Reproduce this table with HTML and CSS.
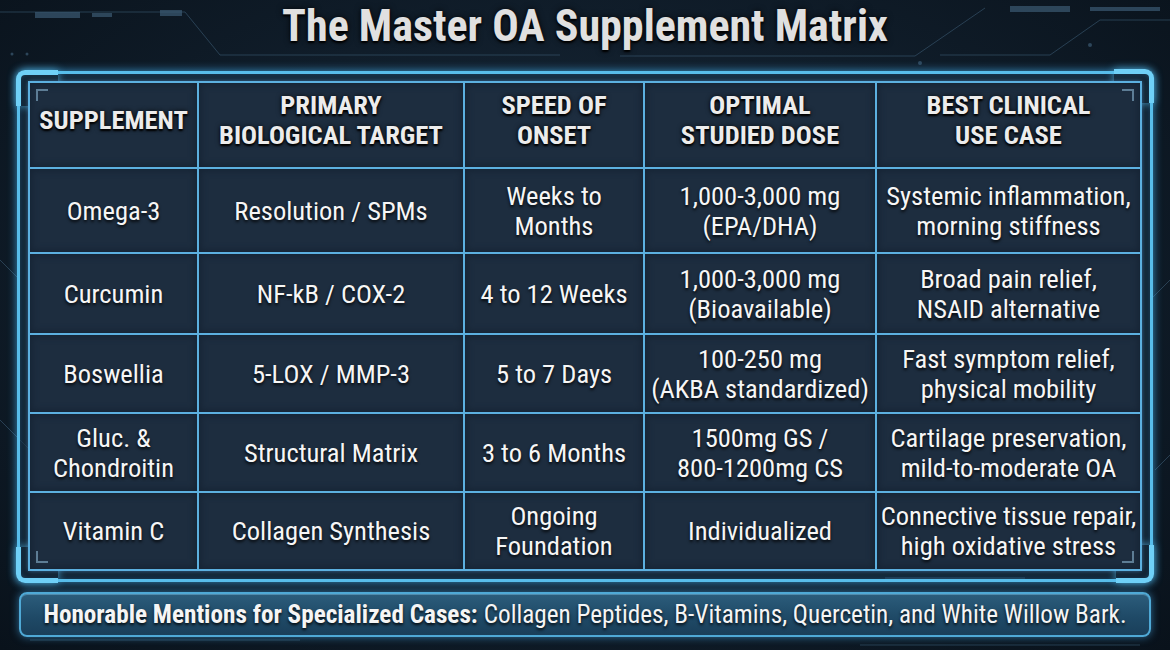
FILE: index.html
```html
<!DOCTYPE html>
<html lang="en">
<head>
<meta charset="utf-8">
<title>The Master OA Supplement Matrix</title>
<link rel="stylesheet" href="styles.css">
</head>
<body>
<div class="page">
  <svg class="circuit" width="1170" height="650" viewBox="0 0 1170 650" aria-hidden="true">
    <g fill="none" stroke="#3b5a73" stroke-width="1" opacity="0.6">
      <path d="M0 12 H185 L220 55 H560"/>
      <path d="M985 8 L915 56 H620"/>
      <path d="M1170 20 H1100 L1050 55 H940"/>
      <path d="M0 260 L20 280"/>
      <path d="M0 420 L30 450"/>
      <path d="M1150 300 L1170 280"/>
      <path d="M1155 470 L1170 455"/>
      <path d="M30 640 H300"/>
      <path d="M860 645 H1140"/>
    </g>
    <g fill="#3b5a73" opacity="0.7">
      <rect x="35" y="12" width="45" height="6"/>
      <rect x="92" y="13" width="20" height="4"/>
      <rect x="160" y="10" width="22" height="6"/>
      <rect x="1010" y="6" width="60" height="6"/>
      <rect x="1090" y="7" width="70" height="4"/>
      <rect x="885" y="577" width="140" height="2"/>
      <circle cx="12" cy="54" r="1.5"/>
      <circle cx="27" cy="54" r="1.5"/>
      <circle cx="1090" cy="45" r="2"/>
      <circle cx="920" cy="63" r="2"/>
    </g>
  </svg>

  <h1 class="title">The Master OA Supplement Matrix</h1>

  <div class="frame">
    <span class="notch notch-tl"></span>
    <span class="notch notch-tr"></span>
    <span class="notch notch-bl"></span>
    <span class="notch notch-br"></span>
    <div class="matrix">
      <span class="bracket bracket-tl"></span>
      <span class="bracket bracket-tr"></span>
      <span class="bracket bracket-bl"></span>
      <span class="bracket bracket-br"></span>

      <div class="cell head">SUPPLEMENT</div>
      <div class="cell head">PRIMARY<br>BIOLOGICAL TARGET</div>
      <div class="cell head">SPEED OF<br>ONSET</div>
      <div class="cell head">OPTIMAL<br>STUDIED DOSE</div>
      <div class="cell head">BEST CLINICAL<br>USE CASE</div>

      <div class="cell">Omega-3</div>
      <div class="cell">Resolution / SPMs</div>
      <div class="cell">Weeks to<br>Months</div>
      <div class="cell">1,000-3,000 mg<br>(EPA/DHA)</div>
      <div class="cell">Systemic inflammation,<br>morning stiffness</div>

      <div class="cell">Curcumin</div>
      <div class="cell">NF-kB / COX-2</div>
      <div class="cell">4 to 12 Weeks</div>
      <div class="cell">1,000-3,000 mg<br>(Bioavailable)</div>
      <div class="cell">Broad pain relief,<br>NSAID alternative</div>

      <div class="cell">Boswellia</div>
      <div class="cell">5-LOX / MMP-3</div>
      <div class="cell">5 to 7 Days</div>
      <div class="cell">100-250 mg<br>(AKBA standardized)</div>
      <div class="cell">Fast symptom relief,<br>physical mobility</div>

      <div class="cell">Gluc. &amp;<br>Chondroitin</div>
      <div class="cell">Structural Matrix</div>
      <div class="cell">3 to 6 Months</div>
      <div class="cell">1500mg GS /<br>800-1200mg CS</div>
      <div class="cell">Cartilage preservation,<br>mild-to-moderate OA</div>

      <div class="cell">Vitamin C</div>
      <div class="cell">Collagen Synthesis</div>
      <div class="cell">Ongoing<br>Foundation</div>
      <div class="cell">Individualized</div>
      <div class="cell">Connective tissue repair,<br>high oxidative stress</div>
    </div>
  </div>

  <div class="banner">
    <strong>Honorable Mentions for Specialized Cases:</strong> Collagen Peptides, B-Vitamins, Quercetin, and White Willow Bark.
  </div>
</div>
</body>
</html>
```

FILE: styles.css
```css
* { box-sizing: border-box; }

html, body {
  margin: 0;
  padding: 0;
}

body {
  width: 1170px;
  height: 650px;
  overflow: hidden;
  background: radial-gradient(ellipse at 50% 45%, #1a2b3c 0%, #101d2a 55%, #09121b 100%);
  font-family: "Roboto Condensed", "Liberation Sans Narrow", "DejaVu Sans Condensed", "Liberation Sans", sans-serif;
  color: #f3f3f3;
}

.page {
  position: relative;
  width: 1170px;
  height: 650px;
  display: flex;
  flex-direction: column;
  align-items: center;
}

.circuit {
  position: absolute;
  left: 0;
  top: 0;
  z-index: 0;
}

.title {
  position: relative;
  z-index: 1;
  margin: 0;
  height: 71px;
  padding-top: 1px;
  font-size: 44px;
  line-height: 50px;
  font-weight: 700;
  color: #e0e0e0;
  text-shadow: 0 2px 2px #000, 0 0 6px rgba(0, 0, 0, 0.8);
}

.frame {
  position: relative;
  z-index: 1;
  width: 1136px;
  height: 511px;
  border: 3px solid #58bdea;
  border-radius: 7px;
  padding: 7px 8px 6px;
  background: rgba(16, 30, 44, 0.6);
  box-shadow: 0 0 10px rgba(70, 180, 245, 0.75), inset 0 0 8px rgba(70, 180, 245, 0.35);
}

.notch {
  position: absolute;
  border: 0 solid #6fd0f7;
  box-shadow: 0 0 8px rgba(90, 200, 250, 0.7);
}

.notch-tl {
  left: -4px; top: -4px;
  width: 42px; height: 36px;
  border-top-width: 5px; border-left-width: 5px;
  border-top-left-radius: 9px;
}
.notch-tr {
  right: -4px; top: -5px;
  width: 40px; height: 34px;
  border-top-width: 5px; border-right-width: 5px;
  border-top-right-radius: 9px;
}
.notch-bl {
  left: -4px; bottom: -4px;
  width: 42px; height: 36px;
  border-bottom-width: 5px; border-left-width: 5px;
  border-bottom-left-radius: 9px;
}
.notch-br {
  right: -4px; bottom: -4px;
  width: 38px; height: 38px;
  border-bottom-width: 5px; border-right-width: 5px;
  border-bottom-right-radius: 9px;
}

.matrix {
  position: relative;
  height: 490px;
  display: grid;
  grid-template-columns: 167px 264px 178px 230px 1fr;
  grid-template-rows: 84px 83px 79px 77px 77px 76px;
  gap: 2px;
  border: 2px solid #5cb0e0;
  background: #5cb0e0;
  box-shadow: 0 0 5px rgba(90, 170, 230, 0.6);
}

.cell {
  display: flex;
  align-items: center;
  justify-content: center;
  text-align: center;
  background: #1d2d3f;
  box-shadow: inset 0 0 6px 2px #162435;
  font-size: 26.5px;
  line-height: 30px;
  color: #f6f6f6;
  text-shadow: 0 2px 3px rgba(0, 0, 0, 0.85);
  white-space: nowrap;
}

.head {
  font-size: 26.5px;
  line-height: 30px;
  font-weight: 700;
  color: #ececec;
  padding-bottom: 10px;
  text-shadow: 0 2px 2px #000, 0 0 5px rgba(0, 0, 0, 0.8);
}

.bracket {
  position: absolute;
  width: 12px;
  height: 12px;
  border: 0 solid #5d7d95;
  z-index: 2;
}
.bracket-tl { left: 6px; top: 6px; border-top-width: 2px; border-left-width: 2px; }
.bracket-tr { right: 6px; top: 6px; border-top-width: 2px; border-right-width: 2px; }
.bracket-bl { left: 6px; bottom: 6px; border-bottom-width: 2px; border-left-width: 2px; }
.bracket-br { right: 6px; bottom: 6px; border-bottom-width: 2px; border-right-width: 2px; }

.banner {
  position: relative;
  z-index: 1;
  margin-top: 10px;
  width: 1132px;
  height: 45px;
  border: 2px solid #4fa9d6;
  border-radius: 8px;
  background: linear-gradient(180deg, #2c5d7c 0%, #1f4a67 55%, #1a3f5a 100%);
  box-shadow: 0 0 8px rgba(70, 170, 235, 0.6), inset 0 1px 0 rgba(140, 210, 245, 0.4);
  display: flex;
  align-items: center;
  justify-content: center;
  font-size: 25.2px;
  color: #f5f5f5;
  text-shadow: 0 2px 3px rgba(0, 0, 0, 0.85);
  white-space: nowrap;
}

.banner strong {
  font-weight: 700;
  margin-right: 6px;
}
```
